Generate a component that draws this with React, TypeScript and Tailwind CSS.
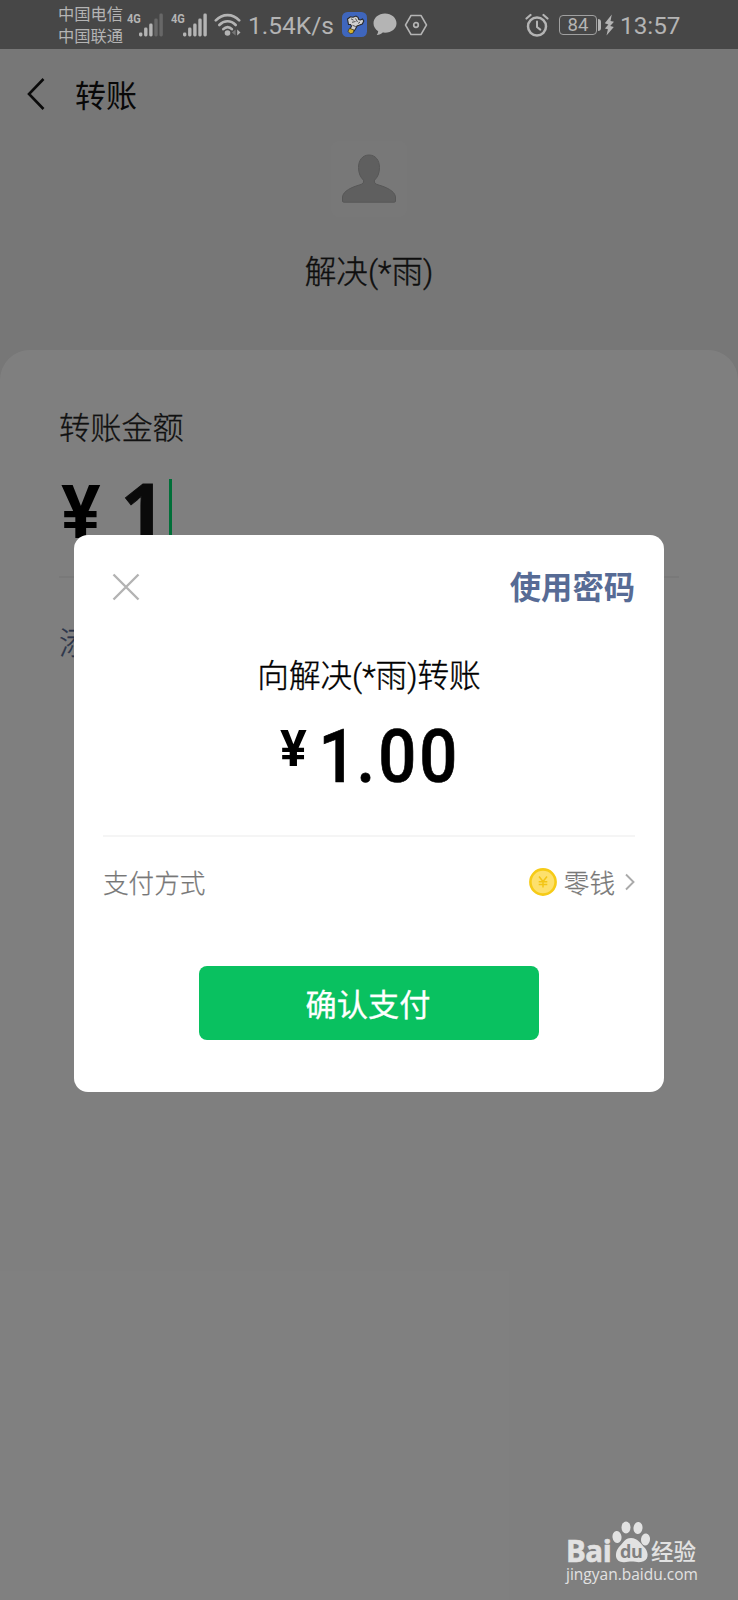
import type { ReactNode } from "react";

const SignalBars = ({ dimFrom = 5 }: { dimFrom?: number }) => {
  const heights = [4, 9, 13, 18, 23];
  return (
    <svg width="25" height="24" viewBox="0 0 25 24" fill="#b4b4b4">
      {heights.map((h, i) => (
        <rect
          key={h}
          x={i * 5.1}
          y={23.5 - h}
          width="3.4"
          height={h}
          rx="1.4"
          opacity={i >= dimFrom ? 0.3 : 1}
        />
      ))}
    </svg>
  );
};

const NetworkLabel = () => (
  <span className="h-6 w-3 origin-left scale-x-[0.85] font-bold text-[13px] leading-[12px] text-[#b4b4b4]">
    4G
  </span>
);

const WifiIcon = () => (
  <svg width="28" height="24" viewBox="0 0 28 24" fill="none" stroke="#b4b4b4" strokeWidth="2.6" strokeLinecap="round">
    <path d="M1.8 7.4C8.6.3 18.6.3 25.2 7.4" />
    <path d="M5.3 12c4.9-5 11.6-5 16.4 0" />
    <path d="M9.3 16.2c2.7-2.8 6-2.8 8.6 0" />
    <circle cx="13.5" cy="20" r="2.8" fill="#b4b4b4" stroke="none" />
    <path d="M21.6 16.5v6l-3.8-3z" fill="#777" stroke="none" />
    <path d="M23.2 16.5v6l3.3-3z" fill="#b4b4b4" stroke="none" />
  </svg>
);

const BeeIcon = () => (
  <svg width="25" height="25" viewBox="0 0 25 25">
    <rect width="25" height="25" rx="5.5" fill="#3f66bd" />
    <path
      d="M5.500 7L8.500 4.800l2.500.5 3-1.300 2 1.300.8 2.200 1.700.5 2-1 1.300 2-1.500 3-3.300 1.300-2 .7-1.500 3-1.500 2-4-1.700 1.500-3.300-1-1.500H6.500z"
      fill="#d0d0d0"
      stroke="#292929"
      strokeWidth="1.100"
    />
    <path d="M9 6.800l2.500 1.400M10 10.300l3.500-.8M13.500 6.500l2 3.500M10.500 13.300l3.300 1.300M16 11.500l2-1.500" stroke="#444" strokeWidth=".9" />
    <path d="M7.500 16.300l4.500 1.700-.8 3-3 .8-2.200-2.500z" fill="#d5b22e" stroke="#3b3520" strokeWidth=".8" />
  </svg>
);

const BubbleIcon = () => (
  <svg width="24" height="23" viewBox="0 0 24 23">
    <path
      d="M12 .5C5.600.5.500 4.800.500 10.300c0 3.400 1.900 6.200 4.700 7.900-.1 1.500-.6 2.800-1.500 3.900 2.600-.1 4.500-1.100 6-2.500 8 1 13.800-3.500 13.800-9.300C23.500 4.800 18.400.5 12 .5z"
      fill="#b4b4b4"
    />
  </svg>
);

const HexIcon = () => (
  <svg width="24" height="22" viewBox="0 0 24 22" fill="none" stroke="#b4b4b4">
    <path d="M7 1.500h10L22.500 11 17 20.500H7L1.500 11z" strokeWidth="1.500" strokeLinejoin="round" />
    <circle cx="12" cy="11" r="2.300" strokeWidth="1.700" />
  </svg>
);

const AlarmIcon = () => (
  <svg width="24" height="24" viewBox="0 0 24 24" fill="none" stroke="#b4b4b4" strokeLinecap="round">
    <circle cx="12" cy="13.500" r="9" strokeWidth="2.500" />
    <path d="M12 8.500V14l3.300 2.600" strokeWidth="2" />
    <path d="M1.500 5.500L5.500 2M22.500 5.500L18.500 2" strokeWidth="2.200" />
  </svg>
);

const BoltIcon = () => (
  <svg width="11" height="22" viewBox="0 0 11 22" fill="#b4b4b4">
    <path d="M7.800.5L.8 9.300l3.600 1.300L.9 14.500l3 .8L2.500 21.500 9.800 13l-3.600-1L10 7.800l-3.500-.7z" />
  </svg>
);

const StatusBar = () => (
  <header className="flex h-[49px] items-center bg-[#474747] pl-[58px] text-[#b4b4b4]">
    <div className="flex w-[69px] flex-col pt-[3px] text-[16.300px] leading-[22px]">
      <span>中国电信</span>
      <span>中国联通</span>
    </div>
    <NetworkLabel />
    <SignalBars dimFrom={3} />
    <span className="w-[7px]" />
    <NetworkLabel />
    <SignalBars />
    <span className="w-[6px]" />
    <WifiIcon />
    <span className="ml-[6px] w-[94px] pt-[3px] text-[24.500px]">1.54K/s</span>
    <BeeIcon />
    <span className="w-[6px]" />
    <BubbleIcon />
    <span className="w-[7px]" />
    <HexIcon />
    <span className="w-[97px]" />
    <AlarmIcon />
    <div className="ml-[10px] flex h-[20px] w-[38px] items-center justify-center rounded-[4px] border-[1.500px] border-[#a0a0a0] pt-px text-[18.500px] leading-none">
      84
    </div>
    <span className="ml-px mr-[3px] h-[12px] w-[3px] rounded-r-sm bg-[#b4b4b4]" />
    <BoltIcon />
    <span className="ml-[5px] pt-[3px] text-[24.300px]">13:57</span>
  </header>
);

const TitleBar = ({ title }: { title: string }) => (
  <div className="flex h-[92px] items-center pl-[26px]">
    <svg className="mb-[2px]" width="20" height="32" viewBox="0 0 20 32" fill="none" stroke="#151515" strokeWidth="2.600">
      <path d="M17.500 1L3 16l14.500 15" />
    </svg>
    <h1 className="ml-[29px] pt-[4px] text-[31px] font-normal text-[#111]">{title}</h1>
  </div>
);

const Payee = ({ name }: { name: string }) => (
  <div className="flex h-[209px] flex-col items-center">
    <div className="flex h-[76px] w-[76px] items-start justify-center rounded-lg bg-[#f1f1f1] pt-[13px]">
      <svg width="54" height="49" viewBox="0 0 54 49">
        <path
          d="M27 1c-6.500 0-10.500 5.300-10.500 12.500 0 6 2 9.800 5 12.700.5 2.800-.5 3.600-3.500 4.600C10 33 1 37 .5 43v4c0 .8.400 1.200 1.200 1.200h50.600c.8 0 1.200-.4 1.200-1.200v-4c-.5-6-9.500-10-17.500-12.200-3-1-4-1.800-3.500-4.600 3-2.900 5-6.700 5-12.700C37.500 6.300 33.500 1 27 1z"
          fill="#bfbfbf"
          stroke="#adadad"
        />
      </svg>
    </div>
    <p className="mt-[32px] text-[31.600px] font-light leading-[48px] text-[#1c1c1c] [-webkit-text-stroke:0.4px]">
      {name}
    </p>
  </div>
);

const AmountCard = () => (
  <section className="flex-1 rounded-t-[30px] bg-white px-[59px] pt-[55px]">
    <p className="text-[31.200px] font-light leading-[48px] text-[#222] [-webkit-text-stroke:0.3px]">转账金额</p>
    <div className="mt-[26px] flex h-[99px] border-b-2 border-[#f2f2f2] font-bold">
      <span className="w-[62px] pl-[2px] text-[74px] leading-[68px] text-black">¥</span>
      <span className="w-[48px] font-['Open_Sans'] text-[76px] leading-[59px] text-[#151515] [-webkit-text-stroke:1px]">1</span>
      <span className="h-[66px] w-[3px] bg-[#00df70]" />
    </div>
    <p className="mt-[42px] text-[31.200px] font-light leading-[48px] text-[#576b95] [-webkit-text-stroke:0.3px]">
      添加转账说明
    </p>
  </section>
);

const Row = ({ label, children }: { label: string; children: ReactNode }) => (
  <div className="flex h-[94px] items-center justify-between border-t-2 border-[#f5f5f5] text-[25.600px] font-light text-[#777] [-webkit-text-stroke:0.25px]">
    <span className="pt-[2px]">{label}</span>
    <div className="flex items-center">{children}</div>
  </div>
);

const PayDialog = () => (
  <div className="h-[557px] w-[590px] rounded-[14px] bg-white pl-[29px] pr-[29px]">
    <div className="flex h-[103px] items-center justify-between pl-[9px]">
      <svg width="28" height="28" viewBox="0 0 28 28" stroke="#b3b3b3" strokeWidth="2.400">
        <path d="M1.500 1.500l25 25M26.500 1.500l-25 25" />
      </svg>
      <button className="pt-[5px] text-[31.300px] font-bold text-[#576b95]">使用密码</button>
    </div>
    <p className="mt-[15px] text-center text-[31.600px] font-light leading-[48px] text-black [-webkit-text-stroke:0.4px]">
      向解决(*雨)转账
    </p>
    <div className="mt-[15px] flex h-[119px] justify-center text-black">
      <span className="mr-[6px] w-[29px] text-[50px] font-bold leading-[67px]">¥</span>
      <span className="w-[143px] origin-left scale-x-90 whitespace-nowrap text-[74.500px] font-medium leading-[81px] tracking-[3.300px] [-webkit-text-stroke:0.7px]">
        <span className="ml-[4px] tracking-[-0.200px]">1</span>.00
      </span>
    </div>
    <Row label="支付方式">
      <svg className="mb-px" width="28" height="28" viewBox="0 0 28 28" fill="none">
        <circle cx="14" cy="14" r="12.600" fill="#fde06c" stroke="#f6cb17" strokeWidth="2.600" />
        <path d="M10 8.500l4 5 4-5M14 13.500v6M9.700 13.800h8.600M9.700 16.500h8.600" stroke="#f3c515" strokeWidth="1.500" />
      </svg>
      <span className="ml-[7px] pt-[2px]">零钱</span>
      <svg className="ml-[10px] mb-[2px]" width="10" height="18" viewBox="0 0 10 18" fill="none" stroke="#aaa" strokeWidth="1.900">
        <path d="M1 1.500L8.500 9 1 16.500" />
      </svg>
    </Row>
    <button className="mx-auto mt-[37px] block h-[74px] w-[340px] rounded-lg bg-[#09c160] pr-[2px] pt-[6px] text-[31.200px] font-normal text-white [-webkit-text-stroke:0.3px]">
      确认支付
    </button>
  </div>
);

const Watermark = () => (
  <div className="absolute bottom-0 right-[40px] h-[79px] w-[132px] text-[#e2e2e2]">
    <div className="flex h-[42px] items-end">
      <span className="w-[46px] font-['Open_Sans'] text-[29.500px] font-bold leading-[24px] tracking-[-0.500px] [-webkit-text-stroke:0.6px]">
        Bai
      </span>
      <div className="relative h-[42px] w-[39px]">
        <svg width="39" height="42" viewBox="0 0 39 42" fill="#e2e2e2">
          <ellipse cx="5" cy="16" rx="4.500" ry="6" transform="rotate(-8 5 16)" />
          <ellipse cx="14" cy="6.500" rx="4.500" ry="6" />
          <ellipse cx="26" cy="7" rx="4.500" ry="6" transform="rotate(8 26 7)" />
          <ellipse cx="33.500" cy="18.500" rx="4.500" ry="6" transform="rotate(8 33.500 18.500)" />
          <path d="M19 17c-6 0-8 5-12 9-4 4.500-5 14 3 15 4 .6 6-.5 9.500-.5s6 1 9.500.5c8-1 8-9 4-14-4-4-7.500-10-14-10z" />
        </svg>
        <span className="absolute left-[8px] top-[22px] font-['Open_Sans'] text-[18px] font-bold leading-[16px] tracking-[-0.500px] text-[#808080]">
          du
        </span>
      </div>
      <span className="text-[22.500px] font-medium leading-[22px]">经验</span>
    </div>
    <p className="pt-px font-['Open_Sans'] text-[15.500px] leading-[21px]">jingyan.baidu.com</p>
  </div>
);

const App = () => {
  return (
    <div
      lang="zh-CN"
      className="flex h-[1600px] w-[738px] flex-col overflow-hidden font-['Roboto','Noto_Sans_CJK_SC',sans-serif]"
    >
      <StatusBar />
      <main className="relative flex flex-1 flex-col bg-[#eee]">
        <TitleBar title="转账" />
        <Payee name="解决(*雨)" />
        <AmountCard />
        <div className="absolute inset-0 flex items-start justify-center bg-black/50 pt-[486px]">
          <PayDialog />
        </div>
        <Watermark />
      </main>
    </div>
  );
};

export default App;
